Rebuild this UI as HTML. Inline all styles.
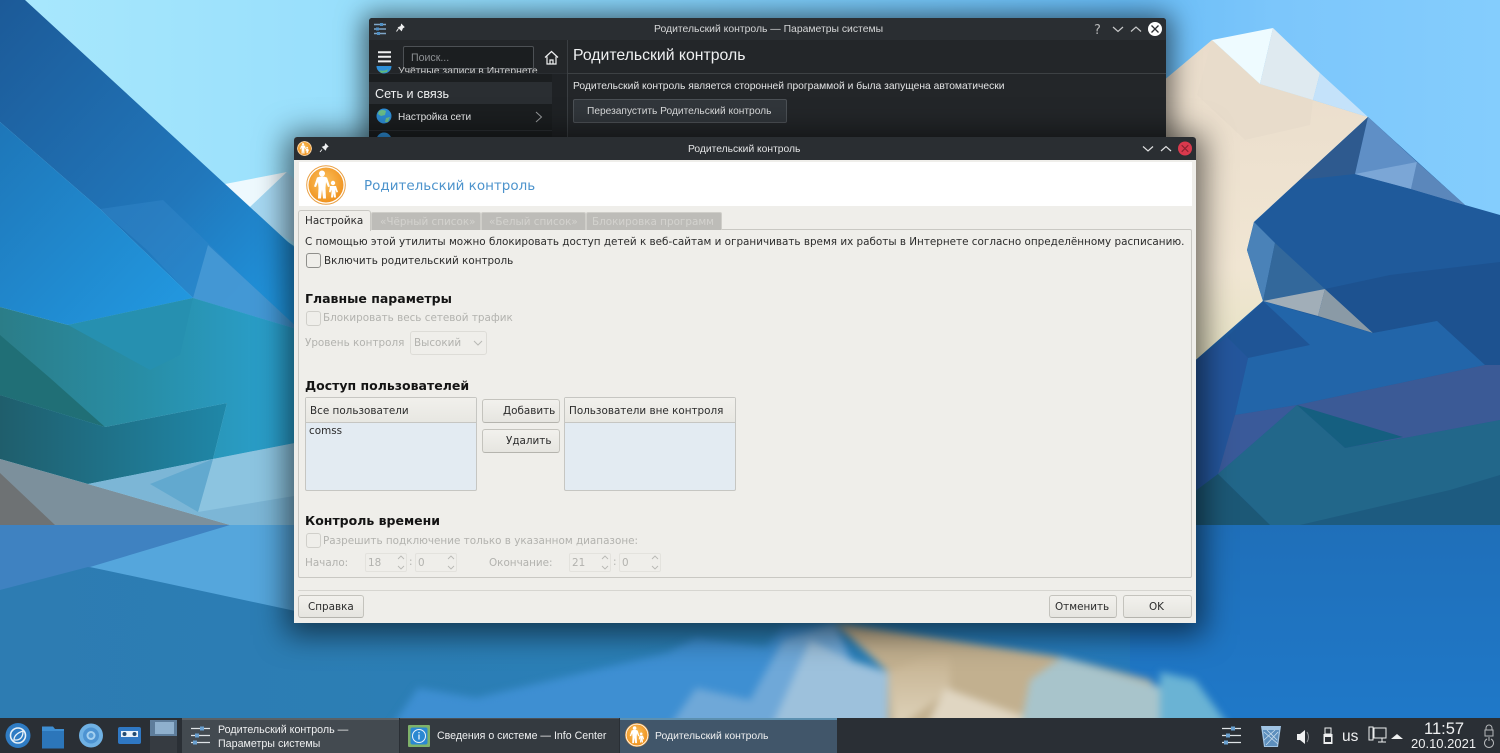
<!DOCTYPE html>
<html lang="ru"><head><meta charset="utf-8"><title>Родительский контроль</title>
<style>
html,body{margin:0;padding:0;width:1500px;height:753px;overflow:hidden;background:#2a7fc0}
*{box-sizing:border-box}
.a{position:absolute}
.t{position:absolute;white-space:nowrap;line-height:16px;height:16px;font-family:"DejaVu Sans",sans-serif;font-size:10.4px;color:#2b2b2b}
.n{font-family:"Liberation Sans",sans-serif;color:#eff0f1;font-size:10.5px}
.g{color:#b2b2ae}
.h{font-weight:bold;font-size:12.5px;color:#141414}
.btn{position:absolute;border:1px solid #c4c3bd;border-bottom-color:#b5b4ae;border-radius:3px;background:linear-gradient(#f2f1ed,#e6e5e0)}
.cb{position:absolute;width:15px;height:15px;border:1px solid #8f8f8b;border-radius:3px;background:#efeeea}
.cb.d{border-color:#d0cfca}
.spin{position:absolute;width:42px;height:19px;border:1px solid #e3e2dd;border-radius:2px;background:#efeeea}
.list{position:absolute;width:172px;height:94px;border:1px solid #c6c6c2;border-radius:2px;background:#e3ebf2}
.lh{position:absolute;left:0;top:0;right:0;height:25px;background:linear-gradient(#f1f0ec,#e8e7e2);border-bottom:1px solid #c6c6c2}
.tab{position:absolute;top:212px;height:18px;background:#bdbcb8;border:1px solid #cfcec9;border-bottom:0;border-radius:2px 2px 0 0}
svg{position:absolute;display:block}
</style></head><body>

<svg class="a" style="left:0;top:0" width="1500" height="753" viewBox="0 0 1500 753">
<defs>
<linearGradient id="sky" x1="0" x2="1" y1="0" y2="0"><stop offset="0" stop-color="#a9e8fd"/><stop offset=".3" stop-color="#93dcfb"/><stop offset=".75" stop-color="#68bcf6"/><stop offset=".85" stop-color="#7cc6fb"/><stop offset="1" stop-color="#84cdfd"/></linearGradient>
<linearGradient id="b1" x1="0" x2="1" y1="0" y2="1"><stop offset="0" stop-color="#1c5a98"/><stop offset=".6" stop-color="#2177bb"/><stop offset="1" stop-color="#1f9ae4"/></linearGradient>
<linearGradient id="b2" x1="0" x2="1" y1="0" y2="1"><stop offset="0" stop-color="#1e76b8"/><stop offset="1" stop-color="#229ae2"/></linearGradient>
<linearGradient id="te" x1="0" x2="1" y1="0" y2="0"><stop offset="0" stop-color="#2b7d88"/><stop offset=".5" stop-color="#288fa8"/><stop offset="1" stop-color="#2aa2d2"/></linearGradient>
<linearGradient id="dt" x1="0" x2="1" y1="0" y2="0"><stop offset="0" stop-color="#1f5e6c"/><stop offset="1" stop-color="#1f87a8"/></linearGradient>
<linearGradient id="w" x1="0" x2="0" y1="0" y2="1"><stop offset="0" stop-color="#1f6fb9"/><stop offset="1" stop-color="#1f7acb"/></linearGradient>
<linearGradient id="wl" x1="0" x2="1" y1="0" y2="0"><stop offset="0" stop-color="#2d7cb2"/><stop offset=".55" stop-color="#2a80b8"/><stop offset="1" stop-color="#1f72c0"/></linearGradient>
<linearGradient id="tn" x1="0" x2="0" y1="0" y2="1"><stop offset="0" stop-color="#e9dccb"/><stop offset=".7" stop-color="#f1e6d3"/><stop offset="1" stop-color="#e6e3c4"/></linearGradient>
<linearGradient id="tb" x1="0" x2="0" y1="0" y2="1"><stop offset="0" stop-color="#c2ae8c"/><stop offset="1" stop-color="#e0d5bd"/></linearGradient>
</defs>
<rect width="1500" height="753" fill="url(#sky)"/>
<!-- left snow behind -->
<polygon points="225,184 287,172 250,207" fill="#eef9fe"/>
<polygon points="250,207 287,172 300,185 300,245 270,230" fill="#a6d8f2"/>
<polygon points="270,230 300,250 300,330 260,280" fill="#2f9fdc"/>
<!-- left bands -->
<polygon points="0,0 25,0 300,253 300,330 193,298 100,209 0,122" fill="url(#b1)"/>
<polygon points="0,122 100,209 193,298 68,325 0,307" fill="url(#b2)"/>
<polygon points="100,209 163,200 210,245 257,290 300,330 193,298 147,250" fill="#3488ca" opacity=".45"/>
<polygon points="208,245 257,290 300,330 193,298" fill="#4a9bd6" opacity=".8"/>
<polygon points="0,307 68,325 193,298 300,330 300,445 213,459 227,403 105,427 0,395" fill="url(#te)"/>
<polygon points="68,325 193,298 180,355 150,370" fill="#2690b0"/>
<polygon points="0,335 50,378 105,427 0,395" fill="#206f76"/>
<polygon points="0,395 105,427 227,403 213,459 88,484 0,459" fill="url(#dt)"/>
<polygon points="0,459 88,484 230,525 0,525" fill="#7c909c"/>
<polygon points="0,473 55,525 0,525" fill="#6e7274"/>
<polygon points="88,484 213,459 300,442 300,525 230,525" fill="#7cb6d6"/>
<polygon points="213,459 300,442 300,495 198,512" fill="#8cc4e0"/>
<polygon points="150,484 213,459 198,512" fill="#62a9cf"/>
<!-- right mountain -->
<polygon points="1150,92 1212,40 1260,84 1313,100 1368,117 1254,222 1247,250 1263,301 1190,365 1150,365" fill="url(#tn)"/>
<polygon points="1212,40 1197,95 1245,140 1310,125 1313,100 1260,84" fill="#e8dccb"/>
<polygon points="1212,40 1273,28 1260,84" fill="#eefbff"/>
<polygon points="1273,28 1320,73 1313,100 1260,84" fill="#dfeaf0"/>
<polygon points="1320,73 1368,117 1313,100" fill="#c4e2fa"/>
<polygon points="1368,117 1465,205 1500,215 1500,525 1150,525 1150,365 1190,365 1263,301 1247,250 1254,222" fill="#1f5a9b"/>
<polygon points="1254,222 1368,117 1355,174 1300,180" fill="#2e5a8f"/>
<polygon points="1368,117 1355,174 1411,189 1465,205 1417,162" fill="#5f8fc6"/>
<polygon points="1355,174 1417,162 1411,189" fill="#7ba6d6"/>
<polygon points="1417,162 1465,205 1411,189" fill="#5b87bb"/>
<polygon points="1254,222 1275,243 1263,301 1247,250" fill="#4a82b8"/>
<polygon points="1275,243 1325,289 1263,301" fill="#33689b"/>
<polygon points="1263,301 1325,289 1318,316" fill="#a1aeb8"/>
<polygon points="1325,289 1373,333 1318,316" fill="#8a9aa6"/>
<polygon points="1325,289 1390,275 1500,262 1500,367 1485,366 1437,321 1373,333" fill="#1d5290"/>
<polygon points="1263,301 1373,333 1437,321 1485,365 1297,405 1235,415 1248,358" fill="#2265a9"/>
<polygon points="1227,337 1263,301 1310,345 1248,358" fill="#1f5596"/>
<polygon points="1190,365 1227,337 1248,358 1235,415 1218,474 1190,495" fill="#24569c"/>
<polygon points="1235,415 1297,405 1218,474" fill="#3a5a9a"/>
<polygon points="1297,405 1485,365 1500,365 1500,420 1410,437 1345,448" fill="#3b5a96"/>
<polygon points="1218,474 1297,405 1345,448 1410,437 1500,420 1500,525 1270,525" fill="#22678a"/>
<polygon points="1297,405 1403,437 1345,448" fill="#155f80"/>
<polygon points="1190,495 1218,474 1270,525 1190,525" fill="#1c5876"/>
<polygon points="1300,525 1450,490 1500,475 1500,525" fill="#1d5b80"/>
<!-- water -->
<rect x="0" y="525" width="1500" height="228" fill="url(#wl)"/>
<rect x="1130" y="525" width="370" height="228" fill="url(#w)"/>
<polygon points="0,525 300,525 300,605 88,567 0,590" fill="#3f82c1"/>
<polygon points="90,567 230,525 300,525 300,612" fill="#55a6dc"/>
<g style="filter:blur(4px)">
<polygon points="389,730 418,688 476,698 667,653 696,638 766,647 783,627 835,623 888,730" fill="#3e8fd2"/>
<polygon points="667,730 696,688 750,700 783,640 835,623 850,660 888,730" fill="#6fa8d8"/>
<polygon points="770,730 810,640 850,660 888,672 900,730" fill="#9dc1dc"/>
<polygon points="835,623 1062,657 1150,680 1190,730 888,730 888,672" fill="#c2b08f"/>
<polygon points="888,672 950,648 950,690 895,730" fill="url(#tb)"/>
<polygon points="925,730 945,688 1062,730" fill="#e0d6c2"/>
<polygon points="1062,657 1190,696 1200,730 1020,730 1030,680" fill="#a8c4cb"/>
<polygon points="1160,672 1195,680 1232,730 1160,730" fill="#6ab3d4"/>
</g>
</svg>

<!-- Dark window -->
<div class="a" style="left:369px;top:18px;width:797px;height:125px;background:#232629;border-radius:3px 3px 0 0;box-shadow:0 2px 26px 6px rgba(0,0,0,.55);overflow:hidden">
  <div class="a" style="left:0;top:0;right:0;height:22px;background:#2a2e32"></div>
  <div class="a" style="left:198px;top:22px;width:1px;height:110px;background:#3a3e42"></div>
  <div class="a" style="left:0;top:55px;width:198px;height:1px;background:#2a2e32"></div>
  <div class="a" style="left:198px;top:55px;right:0;height:1px;background:#3d4144"></div>
  <div class="a" style="left:0;top:56px;width:183px;height:8px;background:#1b1e20"></div>
  <div class="a" style="left:0;top:64px;width:183px;height:22px;background:#2a2e32"></div>
  <div class="a" style="left:0;top:86px;width:183px;height:26px;background:#1b1e20"></div>
  <div class="a" style="left:0;top:112px;width:183px;height:13px;background:#1b1e20;border-top:1px solid #2a2e32"></div>
  <div class="a" style="left:183px;top:56px;width:15px;height:70px;background:#1f2225"></div>
  <div class="a" style="left:34px;top:28px;width:131px;height:23px;background:#1b1e20;border:1px solid #4d5155;border-radius:2px"></div>
  <div class="a" style="left:204px;top:81px;width:214px;height:24px;background:#31363b;border:1px solid #4c5156;border-radius:2px"></div>
</div>
<svg style="left:372px;top:21px" width="36" height="16" viewBox="0 0 36 16">
<g stroke="#7fa6c8" stroke-width="1.4"><path d="M2 3.500h12M2 8h12M2 12.500h12"/></g><g fill="#4f8fc4"><rect x="8" y="2" width="3" height="3"/><rect x="4" y="6.500" width="3" height="3"/><rect x="5" y="11" width="3" height="3"/></g>
<path d="M29.500 3.500l2.500 2.500-1.500 1-1 2.500-3-3 2.500-1zM26.500 7.500l-2 3" fill="#eff0f1" stroke="#eff0f1" stroke-width="1"/>
</svg>
<span class="t n" style="left:654px;top:22px;color:#d5d6d7;font-size:10.400px">Родительский контроль — Параметры системы</span>
<svg style="left:1090px;top:20px" width="76" height="20" viewBox="0 0 76 20">
<text x="4" y="14" font-family="DejaVu Sans,sans-serif" font-size="13" fill="#b5b6b7">?</text>
<path d="M23 7l5 4.500 5-4.500M41 11.500l5-4.500 5 4.500" fill="none" stroke="#c8c9ca" stroke-width="1.200"/>
<circle cx="65" cy="9" r="7" fill="#fff"/><path d="M61.500 5.500l7 7M68.500 5.500l-7 7" stroke="#2a2e32" stroke-width="1.300"/>
</svg>
<svg style="left:378px;top:51px" width="14" height="12" viewBox="0 0 14 12"><path d="M0 1.200h13M0 5.800h13M0 10.400h13" stroke="#eff0f1" stroke-width="2"/></svg>
<span class="t n" style="left:411px;top:50px;color:#8e9194;font-size:10.600px">Поиск...</span>
<svg style="left:544px;top:50px" width="15" height="15" viewBox="0 0 15 15"><path d="M1 7.500L7.500 1.500 14 7.500M3 6.500V14h9V6.500M6 14v-4h3v4" fill="none" stroke="#eff0f1" stroke-width="1.200"/></svg>
<span class="t n" style="left:573px;top:47px;font-size:15.800px;line-height:18px;height:18px">Родительский контроль</span>
<span class="t n" style="left:573px;top:79px;font-size:10.300px;color:#e3e4e5">Родительский контроль является сторонней программой и была запущена автоматически</span>
<span class="t n" style="left:587px;top:104px;font-size:10.200px;color:#dcddde">Перезапустить Родительский контроль</span>
<span class="t n" style="left:398px;top:65px;font-size:10.400px;color:#c9caca;height:8px;overflow:hidden;line-height:14px">Учётные записи в Интернете</span>
<span class="t n" style="left:375px;top:86px;font-size:12.600px">Сеть и связь</span>
<span class="t n" style="left:398px;top:110px;font-size:10.100px">Настройка сети</span>
<svg style="left:376px;top:66px" width="16" height="8" viewBox="0 0 16 8"><circle cx="8" cy="0" r="7.500" fill="#2e8fd8"/><path d="M3 4q5 2 9-1l-1 3-6 1z" fill="#5fb87a"/></svg>
<svg style="left:376px;top:108px" width="16" height="16" viewBox="0 0 16 16"><circle cx="8" cy="8" r="7.500" fill="#2e8fd8"/><path d="M3 3q4-2 7 0l-1 4-4 1-3-2zM10 10l4-1-2 5-3 0z" fill="#6cc08a"/></svg>
<svg style="left:376px;top:132px" width="16" height="8" viewBox="0 0 16 8"><circle cx="8" cy="8" r="7.500" fill="#2e8fd8"/></svg>
<svg style="left:535px;top:111px" width="8" height="12" viewBox="0 0 8 12"><path d="M1 1l5.500 5L1 11" fill="none" stroke="#9a9c9e" stroke-width="1"/></svg>

<!-- Dialog -->
<div class="a" style="left:294px;top:137px;width:902px;height:486px;background:#efeeea;border-radius:3px 3px 0 0;box-shadow:0 4px 30px 8px rgba(0,0,0,.55)">
  <div class="a" style="left:0;top:0;right:0;height:23px;background:#2a2e32;border-radius:3px 3px 0 0"></div>
  <div class="a" style="left:5px;top:25px;width:893px;height:44px;background:#fff"></div>
  <div class="a" style="left:4px;top:92px;width:894px;height:349px;border:1px solid #c9c8c3;border-radius:2px"></div>
  <div class="a" style="left:4px;top:453px;width:894px;height:1px;background:#d6d5d0"></div>
</div>
<svg width="0" height="0" style="position:absolute"><defs>
<radialGradient id="og" cx=".45" cy=".4" r=".65"><stop offset="0" stop-color="#fbc25f"/><stop offset="1" stop-color="#ef8f1a"/></radialGradient>
<symbol id="par" viewBox="0 0 40 40"><circle cx="20" cy="20" r="19.300" fill="#fff" stroke="#eaa044" stroke-width="1"/><circle cx="20" cy="20" r="17.500" fill="url(#og)"/>
<g fill="#fff"><circle cx="16" cy="8.500" r="3"/><path d="M11 12.500q5-2 10 0l3 9-2 .5-2-5-.5 6 .5 10.500h-3l-1-9-1 9h-3l.5-10.500-.5-6-2 5-2-.5z"/><circle cx="27" cy="18" r="2.200"/><path d="M24 21h6l2 6-1.500.5-1-3v3l.5 5h-2l-.5-4-.5 4h-2l.5-5v-3l-1 3-1.500-.5z"/></g></symbol>
</defs></svg>
<svg style="left:297px;top:141px" width="15" height="15"><use href="#par" width="15" height="15"/></svg>
<svg style="left:319px;top:143px" width="10" height="10" viewBox="0 0 10 10"><path d="M6.500 1l2.500 2.500-1.500 1-1 2.500-3-3 2.500-1zM3 6.500L1 9" fill="#eff0f1" stroke="#eff0f1" stroke-width=".9"/></svg>
<span class="t n" style="left:688px;top:142px;font-size:10.300px;color:#e3e4e5">Родительский контроль</span>
<svg style="left:1140px;top:140px" width="56" height="18" viewBox="0 0 56 18">
<path d="M3 6.500l5 4.500 5-4.500M21 11l5-4.500 5 4.500" fill="none" stroke="#dfe0e1" stroke-width="1.200"/>
<circle cx="45" cy="8.500" r="7" fill="#d9394d"/><path d="M41.700 5.200l6.600 6.600M48.300 5.200l-6.600 6.600" stroke="#8b2231" stroke-width="1.100"/></svg>
<svg style="left:306px;top:165px" width="40" height="40"><use href="#par" width="40" height="40"/></svg>
<span class="t" style="left:364px;top:178px;font-size:13.500px;color:#4c93cc">Родительский контроль</span>

<div class="a" style="left:298px;top:210px;width:73px;height:21px;background:#efeeea;border:1px solid #c9c8c3;border-bottom:0;border-radius:3px 3px 0 0"></div>
<div class="tab" style="left:371px;width:110px"></div>
<div class="tab" style="left:481px;width:105px"></div>
<div class="tab" style="left:586px;width:136px"></div>
<span class="t" style="left:305px;top:213px">Настройка</span>
<span class="t" style="left:380px;top:214px;color:#d3d2ce">«Чёрный список»</span>
<span class="t" style="left:489px;top:214px;color:#d3d2ce">«Белый список»</span>
<span class="t" style="left:592px;top:214px;color:#d3d2ce">Блокировка программ</span>

<span class="t" style="left:305px;top:234px">С помощью этой утилиты можно блокировать доступ детей к веб-сайтам и ограничивать время их работы в Интернете согласно определённому расписанию.</span>
<div class="cb" style="left:306px;top:253px"></div>
<span class="t" style="left:324px;top:253px">Включить родительский контроль</span>
<span class="t h" style="left:305px;top:291px">Главные параметры</span>
<div class="cb d" style="left:306px;top:311px"></div>
<span class="t g" style="left:323px;top:310px">Блокировать весь сетевой трафик</span>
<span class="t g" style="left:305px;top:335px">Уровень контроля</span>
<div class="a" style="left:410px;top:331px;width:77px;height:24px;border:1px solid #dddcd7;border-radius:3px;background:#efeeea"></div>
<span class="t g" style="left:414px;top:335px">Высокий</span>
<svg style="left:473px;top:340px" width="10" height="7" viewBox="0 0 10 7"><path d="M1 1l4 4 4-4" fill="none" stroke="#b8b8b4" stroke-width="1"/></svg>

<span class="t h" style="left:305px;top:378px">Доступ пользователей</span>
<div class="list" style="left:305px;top:397px"><div class="lh"></div></div>
<div class="list" style="left:564px;top:397px"><div class="lh"></div></div>
<span class="t" style="left:310px;top:403px">Все пользователи</span>
<span class="t" style="left:569px;top:403px">Пользователи вне контроля</span>
<span class="t" style="left:309px;top:423px">comss</span>
<div class="btn" style="left:482px;top:399px;width:78px;height:24px"></div>
<div class="btn" style="left:482px;top:429px;width:78px;height:24px"></div>
<span class="t" style="left:503px;top:403px">Добавить</span>
<span class="t" style="left:506px;top:433px">Удалить</span>

<span class="t h" style="left:305px;top:513px">Контроль времени</span>
<div class="cb d" style="left:306px;top:533px"></div>
<span class="t g" style="left:323px;top:533px">Разрешить подключение только в указанном диапазоне:</span>
<span class="t g" style="left:305px;top:555px">Начало:</span>
<div class="spin" style="left:365px;top:553px"></div>
<span class="t g" style="left:368px;top:555px">18</span>
<span class="t g" style="left:409px;top:554px">:</span>
<div class="spin" style="left:415px;top:553px"></div>
<span class="t g" style="left:418px;top:555px">0</span>
<span class="t g" style="left:489px;top:555px">Окончание:</span>
<div class="spin" style="left:569px;top:553px"></div>
<span class="t g" style="left:572px;top:555px">21</span>
<span class="t g" style="left:613px;top:554px">:</span>
<div class="spin" style="left:619px;top:553px"></div>
<span class="t g" style="left:622px;top:555px">0</span>
<svg style="left:365px;top:553px" width="300" height="19" viewBox="0 0 300 19"><g fill="none" stroke="#b8b8b4" stroke-width=".9"><path d="M33 6l3-3 3 3M33 13l3 3 3-3"/><path d="M83 6l3-3 3 3M83 13l3 3 3-3"/><path d="M237 6l3-3 3 3M237 13l3 3 3-3"/><path d="M287 6l3-3 3 3M287 13l3 3 3-3"/></g></svg>

<div class="btn" style="left:298px;top:595px;width:66px;height:23px"></div>
<div class="btn" style="left:1049px;top:595px;width:68px;height:23px"></div>
<div class="btn" style="left:1123px;top:595px;width:69px;height:23px"></div>
<span class="t" style="left:308px;top:599px">Справка</span>
<span class="t" style="left:1055px;top:599px">Отменить</span>
<span class="t" style="left:1149px;top:599px">OK</span>

<!-- Taskbar -->
<div class="a" style="left:0;top:718px;width:1500px;height:35px;background:#2a2f35"></div>
<div class="a" style="left:150px;top:720px;width:27px;height:33px;background:#363b41"></div>
<div class="a" style="left:150px;top:720px;width:27px;height:16px;background:#5e7d9b"></div>
<div class="a" style="left:155px;top:722px;width:19px;height:12px;background:#8fb0cd"></div>
<div class="a" style="left:182px;top:718px;width:217px;height:35px;background:#434a50;border-top:2px solid #5a6166"></div>
<div class="a" style="left:400px;top:718px;width:219px;height:35px;background:#343a40;border-top:1px solid #4a5056"></div>
<div class="a" style="left:620px;top:718px;width:217px;height:35px;background:#41566a;border-top:2px solid #5c90b0"></div>
<svg style="left:0;top:718px" width="180" height="35" viewBox="0 0 180 35">
<circle cx="18" cy="17.500" r="12.500" fill="#2f7cc4"/><circle cx="18" cy="17.500" r="7.500" fill="none" stroke="#e8f1f8" stroke-width="1.600"/><path d="M14 22q0-6 9-9q0 8-6 9q-2 0-3 0z" fill="#2f7cc4" stroke="#e8f1f8" stroke-width="1.300"/>
<path d="M42 8.500h11l2 2.500h9v19.500H42z" fill="#3e8ed2"/><path d="M42 13h22v17.500H42z" fill="#2c76ba"/>
<circle cx="91" cy="17.500" r="12" fill="#6fb1e4"/><circle cx="91" cy="17.500" r="8" fill="#4d93d2"/><circle cx="91" cy="17.500" r="4.500" fill="#a5d0f0"/><circle cx="91" cy="17.500" r="2.500" fill="#5a9ed8"/>
<rect x="118" y="9" width="23" height="17" rx="2" fill="#2f78c4"/><rect x="121" y="13" width="17" height="6" fill="#eaf2fa"/><circle cx="124.500" cy="16" r="2" fill="#234a70"/><circle cx="134.500" cy="16" r="2" fill="#234a70"/>
</svg>
<svg style="left:190px;top:725px" width="20" height="22" viewBox="0 0 20 22"><g stroke="#dfe3e6" stroke-width="1.300"><path d="M1 3.500h19M1 10.500h19M1 17.500h19"/></g><g fill="#6aa0cf"><rect x="10" y="1.500" width="4" height="4"/><rect x="5" y="8.500" width="4" height="4"/><rect x="3" y="15.500" width="4" height="4"/></g></svg>
<span class="t n" style="left:218px;top:722px;font-size:10.700px">Родительский контроль —</span>
<span class="t n" style="left:218px;top:736px;font-size:10.700px">Параметры системы</span>
<svg style="left:408px;top:725px" width="22" height="22" viewBox="0 0 22 22"><rect width="22" height="22" rx="1" fill="#7fb26a"/><rect x="2.500" y="2.500" width="17" height="17" rx="2" fill="#2a88d2"/><circle cx="11" cy="11" r="6.500" fill="none" stroke="#eaf3fa" stroke-width="1"/><path d="M11 9.500v5M11 7v1.200" stroke="#eaf3fa" stroke-width="1.300"/></svg>
<span class="t n" style="left:437px;top:728px;font-size:10.600px">Сведения о системе — Info Center</span>
<svg style="left:625px;top:723px" width="24" height="24"><use href="#par" width="24" height="24"/></svg>
<span class="t n" style="left:655px;top:729px;font-size:10.400px">Родительский контроль</span>

<svg style="left:1220px;top:724px" width="280" height="26" viewBox="0 0 280 26">
<g stroke="#dfe3e6" stroke-width="1.300"><path d="M2 4.500h19M2 11.500h19M2 18.500h19"/></g><g fill="#6aa0cf"><rect x="11" y="2.500" width="4" height="4"/><rect x="6" y="9.500" width="4" height="4"/><rect x="4" y="16.500" width="4" height="4"/></g>
<path d="M41 2h20l-3 21H44z" fill="#a0c4e4"/><path d="M43 6h16l-2 16H45z" fill="#5d8fbd"/><path d="M44 8l14 12M58 8L46 21M47 6l10 10M55 6L44 16" stroke="#c8dcec" stroke-width=".8"/>
<path d="M77 10h3l5-4v14l-5-4h-3z" fill="#eff0f1"/><path d="M87 8q3 5 0 10" fill="none" stroke="#8f9396" stroke-width="1"/>
<rect x="105" y="4" width="6" height="6" fill="none" stroke="#eff0f1" stroke-width="1"/><rect x="103.500" y="10" width="9" height="10" fill="#eff0f1"/><rect x="105" y="13" width="6" height="5" fill="#2a2f35"/>
<path d="M154 4h12v10h-12zM158 18h8M162 14v4" fill="none" stroke="#eff0f1" stroke-width="1"/><path d="M149 3h4v13h-4z" fill="#2a2f35" stroke="#eff0f1" stroke-width="1"/>
<path d="M171 15l6-5 6 5z" fill="#eff0f1"/>
<path d="M266 6v-2a3 3 0 0 1 6 0v2" fill="none" stroke="#b7b9bb" stroke-width="1"/><rect x="265" y="6" width="8" height="6" fill="none" stroke="#b7b9bb" stroke-width="1"/>
<path d="M267 15a4.500 4.500 0 1 0 4 0M269 13v4" fill="none" stroke="#b7b9bb" stroke-width="1"/>
</svg>
<span class="t n" style="left:1342px;top:728px;font-size:15.500px;height:18px;line-height:18px">us</span>
<span class="t n" style="left:1424px;top:720px;font-size:16.500px;height:18px;line-height:18px;color:#eff0f1">11:57</span>
<span class="t n" style="left:1411px;top:736px;font-size:13px;color:#eff0f1">20.10.2021</span>
</body></html>
